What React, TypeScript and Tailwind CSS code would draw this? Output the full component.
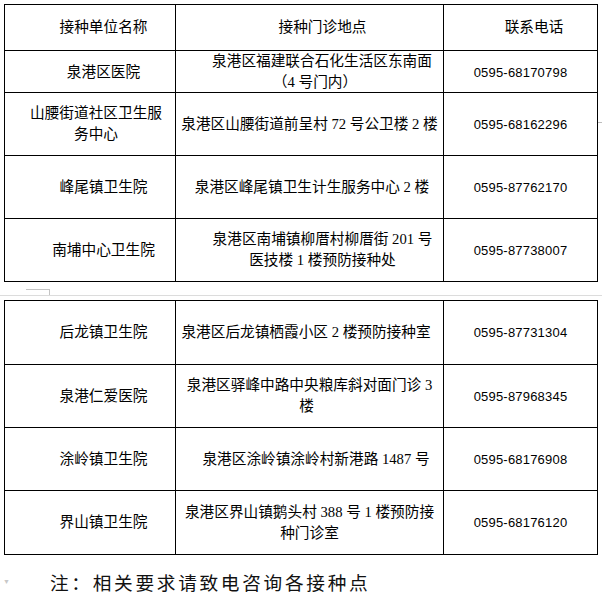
const cjk = '"Liberation Serif", "Noto Sans CJK SC", sans-serif'

type Row = {
  h: string
  name: React.ReactNode
  namePad: string
  addr: React.ReactNode
  addrPad: string
  phone: string
}

const first: Row[] = [
  {
    h: 'h-[42px]',
    name: '泉港区医院',
    namePad: 'pl-[27px]',
    addr: (
      <>
        <span>泉港区福建联合石化生活区东南面</span>
        <span className="pr-[14px]">（4 号门内）</span>
      </>
    ),
    addrPad: 'pl-[25px]',
    phone: '0595-68170798',
  },
  {
    h: 'h-[63px]',
    name: (
      <>
        <span>山腰街道社区卫生服</span>
        <span>务中心</span>
      </>
    ),
    namePad: 'pl-[12px]',
    addr: '泉港区山腰街道前呈村 72 号公卫楼 2 楼',
    addrPad: 'pl-0',
    phone: '0595-68162296',
  },
  {
    h: 'h-[63px]',
    name: '峰尾镇卫生院',
    namePad: 'pl-[27px]',
    addr: '泉港区峰尾镇卫生计生服务中心 2 楼',
    addrPad: 'pl-[5px]',
    phone: '0595-87762170',
  },
  {
    h: 'h-[63px]',
    name: '南埔中心卫生院',
    namePad: 'pl-[27px]',
    addr: (
      <>
        <span>泉港区南埔镇柳厝村柳厝街 201 号</span>
        <span>医技楼 1 楼预防接种处</span>
      </>
    ),
    addrPad: 'pl-[26px]',
    phone: '0595-87738007',
  },
]

const second: Row[] = [
  {
    h: 'h-[64px]',
    name: '后龙镇卫生院',
    namePad: 'pl-[27px]',
    addr: '泉港区后龙镇栖霞小区 2 楼预防接种室',
    addrPad: 'pr-[7px]',
    phone: '0595-87731304',
  },
  {
    h: 'h-[63px]',
    name: '泉港仁爱医院',
    namePad: 'pl-[27px]',
    addr: (
      <>
        <span>泉港区驿峰中路中央粮库斜对面门诊 3</span>
        <span className="pr-[6px]">楼</span>
      </>
    ),
    addrPad: 'pl-0',
    phone: '0595-87968345',
  },
  {
    h: 'h-[63px]',
    name: '涂岭镇卫生院',
    namePad: 'pl-[27px]',
    addr: '泉港区涂岭镇涂岭村新港路 1487 号',
    addrPad: 'pl-[13px]',
    phone: '0595-68176908',
  },
  {
    h: 'h-[64px]',
    name: '界山镇卫生院',
    namePad: 'pl-[27px]',
    addr: (
      <>
        <span>泉港区界山镇鹅头村 388 号 1 楼预防接</span>
        <span>种门诊室</span>
      </>
    ),
    addrPad: 'pl-0',
    phone: '0595-68176120',
  },
]

const cell = 'flex flex-col items-center justify-center text-center border-r border-black leading-[21px]'

function DataRow({ row }: { row: Row }) {
  return (
    <div className={`grid grid-cols-[171px_268px_154px] border-b border-black ${row.h}`}>
      <div className={`${cell} ${row.namePad}`}>{row.name}</div>
      <div className={`${cell} ${row.addrPad}`}>{row.addr}</div>
      <div className={cell}>
        <span className="text-[13px] tracking-[0.2px]" style={{ fontFamily: '"Liberation Sans", sans-serif' }}>
          {row.phone}
        </span>
      </div>
    </div>
  )
}

export default function App() {
  return (
    <div
      className="relative w-[602px] h-[597px] bg-white text-black text-[14.67px] overflow-hidden"
      style={{ fontFamily: cjk }}
    >
      <div className="pt-[4px] pl-[4px]">
        <div className="w-[594px] border-l border-t border-black">
          <div className="grid grid-cols-[171px_268px_154px] border-b border-black h-[46px]">
            <div className={`${cell} pl-[27px]`}>接种单位名称</div>
            <div className={`${cell} pl-[26px]`}>接种门诊地点</div>
            <div className={`${cell} pl-[27px]`}>联系电话</div>
          </div>
          {first.map((r) => (
            <DataRow key={r.phone} row={r} />
          ))}
        </div>
      </div>

      <div className="relative h-[13px]">
        <div className="absolute left-[26px] top-[7px] w-[24px] h-[6px] border-t border-r border-[#c4c4c4]" />
      </div>
      <div className="h-px bg-[#dcdcdc]" />
      <div className="h-[4px]" />

      <div className="pl-[4px]">
        <div className="w-[594px] border-l border-t border-black">
          {second.map((r) => (
            <DataRow key={r.phone} row={r} />
          ))}
        </div>
      </div>

      <div className="flex items-center mt-[15px] h-[24px]">
        <span className="w-[50px] pl-[3px] text-[7px] leading-none text-[#c8c8c8]">▼</span>
        <span className="text-[18.67px] tracking-[2.7px] text-[#111]" style={{ fontFamily: '"Noto Sans CJK SC", sans-serif' }}>
          注：相关要求请致电咨询各接种点
        </span>
      </div>

      <div className="absolute left-[598px] top-[122px] w-[4px] h-px bg-[#bdbdbd]" />
    </div>
  )
}
